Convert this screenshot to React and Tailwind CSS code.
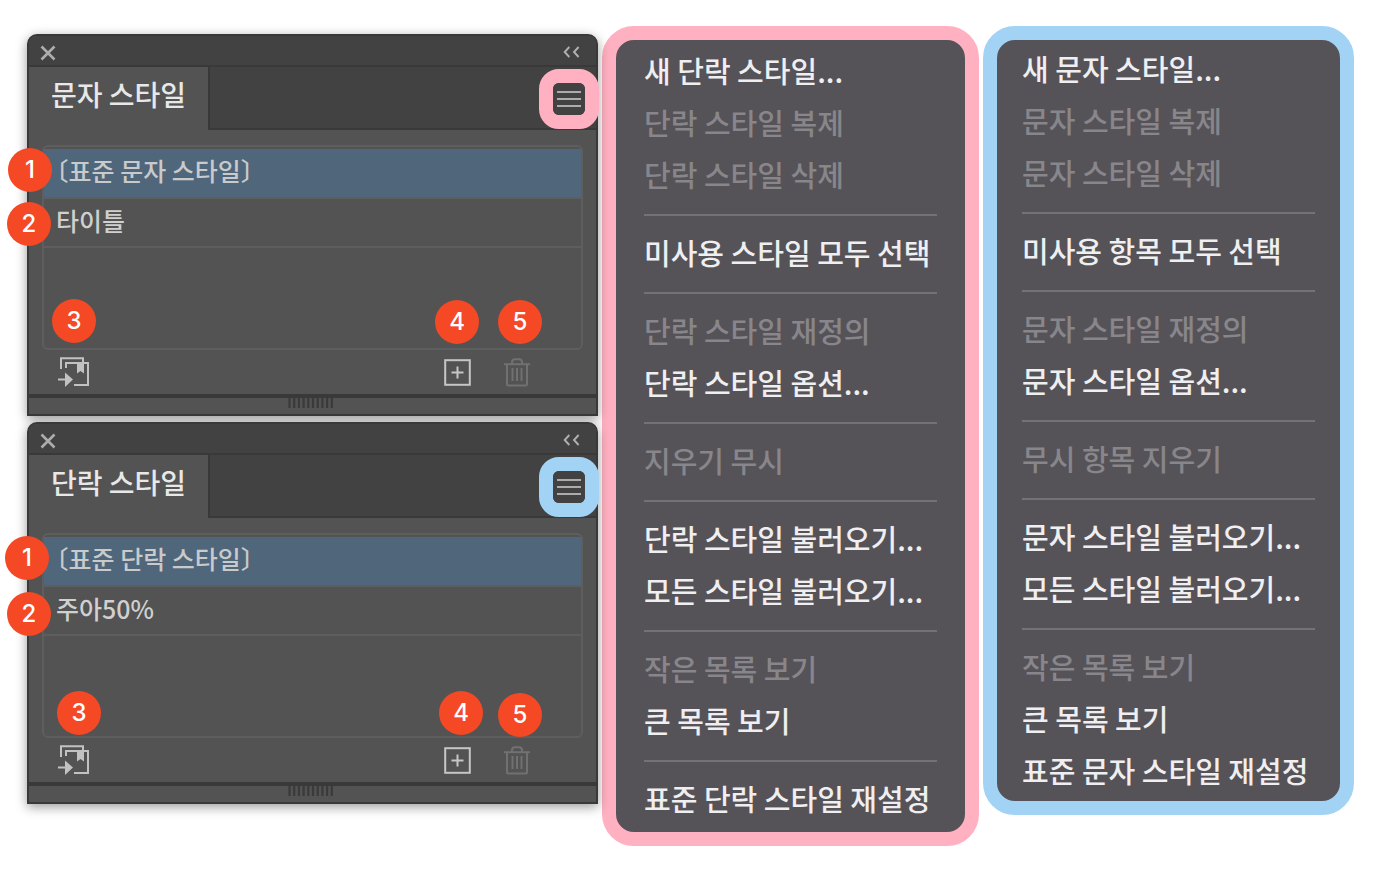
import React from "react";

const characterMenu = [
  { label: "새 단락 스타일..." },
  { label: "단락 스타일 복제", disabled: true },
  { label: "단락 스타일 삭제", disabled: true },
  null,
  { label: "미사용 스타일 모두 선택" },
  null,
  { label: "단락 스타일 재정의", disabled: true },
  { label: "단락 스타일 옵션..." },
  null,
  { label: "지우기 무시", disabled: true },
  null,
  { label: "단락 스타일 불러오기..." },
  { label: "모든 스타일 불러오기..." },
  null,
  { label: "작은 목록 보기", disabled: true },
  { label: "큰 목록 보기" },
  null,
  { label: "표준 단락 스타일 재설정" },
];

const paragraphMenu = [
  { label: "새 문자 스타일..." },
  { label: "문자 스타일 복제", disabled: true },
  { label: "문자 스타일 삭제", disabled: true },
  null,
  { label: "미사용 항목 모두 선택" },
  null,
  { label: "문자 스타일 재정의", disabled: true },
  { label: "문자 스타일 옵션..." },
  null,
  { label: "무시 항목 지우기", disabled: true },
  null,
  { label: "문자 스타일 불러오기..." },
  { label: "모든 스타일 불러오기..." },
  null,
  { label: "작은 목록 보기", disabled: true },
  { label: "큰 목록 보기" },
  { label: "표준 문자 스타일 재설정" },
];

const characterBadges = [
  "left-[-21px] top-[112px]",
  "left-[-22px] top-[166px]",
  "left-[23px] top-[263px]",
  "right-[117px] top-[264px]",
  "right-[54px] top-[264px]",
];

const paragraphBadges = [
  "left-[-24px] top-[112px]",
  "left-[-22px] top-[168px]",
  "left-[28px] top-[267px]",
  "right-[113px] top-[267px]",
  "right-[54px] top-[269px]",
];

function CloseIcon() {
  return (
    <svg width="16" height="16" viewBox="0 0 16 16" fill="none" stroke="#adadad" strokeWidth="2.6" aria-hidden="true">
      <path d="M1.5 1.5 14.5 14.5M14.5 1.5 1.5 14.5" />
    </svg>
  );
}

function CollapseIcon() {
  return (
    <svg width="17" height="12" viewBox="0 0 17 12" fill="none" stroke="#b0b0b0" strokeWidth="1.9" aria-hidden="true">
      <path d="M6.3 1 1.7 6l4.6 5M15.6 1 11 6l4.6 5" />
    </svg>
  );
}

function ImportIcon() {
  return (
    <svg width="32" height="30" viewBox="0 0 32 30" fill="none" stroke="#c2c2c2" strokeWidth="2" aria-hidden="true">
      <path d="M4 12V1.2h22V5" />
      <path d="M9 11V6h22v22H17" />
      <path d="M1 22.5h9" />
      <path d="M8 15.5 16 22.5 8 30Z" fill="#c2c2c2" stroke="none" />
      <path d="M20 5h7v11.5l-3.5-2.5-3.5 2.5Z" fill="#c2c2c2" stroke="none" />
    </svg>
  );
}

function AddIcon() {
  return (
    <svg width="27" height="27" viewBox="0 0 27 27" fill="none" stroke="#c6c6c6" strokeWidth="2" aria-hidden="true">
      <rect x="1.2" y="1.2" width="24.6" height="24.6" />
      <path d="M7.5 13.5h12M13.5 7.5v12" />
    </svg>
  );
}

function TrashIcon() {
  return (
    <svg width="26" height="29" viewBox="0 0 26 29" fill="none" stroke="#717171" strokeWidth="2" aria-hidden="true">
      <path d="M0 6.2h26" />
      <path d="M8 6V4.2Q8 1.2 11 1.2h4Q18 1.2 18 4.2V6" />
      <path d="M3 6v20q0 1.5 1.5 1.5h17q1.5 0 1.5-1.5V6" />
      <path d="M8.5 10v13M13 10v13M17.5 10v13" />
    </svg>
  );
}

function Grip() {
  return (
    <svg width="46" height="10" viewBox="0 0 46 10" stroke="#3a3a3a" strokeWidth="2.2" aria-hidden="true">
      <path d="M1.5 0v10M6.2 0v10M10.9 0v10M15.6 0v10M20.3 0v10M25 0v10M29.7 0v10M34.4 0v10M39.1 0v10M43.8 0v10" />
    </svg>
  );
}

function StylePanel({ title, baseStyle, customStyle, ringClass, badges }) {
  return (
    <section
      aria-label={title}
      className="relative rounded-t-[10px] border-2 border-[#393939] bg-[#535353] shadow-[0_3px_12px_rgba(0,0,0,0.4)]"
    >
      <header className="flex h-[31px] items-center justify-between rounded-t-lg border-b-2 border-[#393939] bg-[#424242] pr-4 pl-[11px]">
        <button type="button" aria-label="닫기" className="mt-1">
          <CloseIcon />
        </button>
        <button type="button" aria-label="접기" className="mt-0.5">
          <CollapseIcon />
        </button>
      </header>

      <div className="relative flex h-[63px]" role="tablist">
        <button
          type="button"
          role="tab"
          aria-selected="true"
          className="w-[179px] pb-[9px] pl-[22px] text-left text-[28px] leading-[54px] font-medium text-[#e8e8e8]"
        >
          {title}
        </button>
        <div className="flex-1 border-b-2 border-l-2 border-[#393939] bg-[#424242]" />
        <button
          type="button"
          aria-label="패널 메뉴"
          className={`absolute top-0.5 -right-[3px] flex size-[60px] items-center justify-center rounded-[20px] border-[14px] ${ringClass}`}
        >
          <span className="flex size-8 shrink-0 items-center justify-center rounded-md bg-[#424242]">
            <svg width="24" height="18" viewBox="0 0 24 18" stroke="#acacac" strokeWidth="2" aria-hidden="true">
              <path d="M0 2h24M0 9h24M0 16h24" />
            </svg>
          </span>
        </button>
      </div>

      <div className="px-[13px] pt-[15px]">
        <ul className="h-[205px] rounded-md border-2 border-[#5e5e5e] pt-0.5 text-[25px] leading-[42px] font-medium">
          <li className="border-b-2 border-[#5e5e5e]">
            <button
              type="button"
              className="block h-12 w-full bg-[#50667a] pb-1.5 pl-3 text-left text-[#c8cacc] [font-feature-settings:'halt']"
            >
              {baseStyle}
            </button>
          </li>
          <li className="border-b-2 border-[#5e5e5e]">
            <button type="button" className="block h-[47px] w-full pb-[5px] pl-3 text-left text-[#d0d0d0]">
              {customStyle}
            </button>
          </li>
        </ul>
        <div className="flex h-11 items-center pr-[53px] pl-[15px]">
          <button type="button" aria-label="스타일 불러오기">
            <ImportIcon />
          </button>
          <button type="button" aria-label="새 스타일" className="mr-[33px] ml-auto">
            <AddIcon />
          </button>
          <button type="button" aria-label="스타일 삭제" disabled>
            <TrashIcon />
          </button>
        </div>
      </div>

      <div className="flex h-5 justify-center border-t-4 border-[#393939] pr-1">
        <Grip />
      </div>

      {badges.map((place, i) => (
        <span
          key={place}
          className={`absolute flex size-11 items-center justify-center rounded-full bg-[#f54825] font-['Inter',sans-serif] text-2xl font-medium text-white ${place}`}
        >
          {i + 1}
        </span>
      ))}
    </section>
  );
}

function StyleMenu({ label, items, className }) {
  return (
    <ul
      role="menu"
      aria-label={label}
      className={`rounded-[32px] border-[14px] bg-[#555358] text-[29px] leading-[48px] font-medium ${className}`}
    >
      {items.map((item, i) =>
        item ? (
          <li key={i} role="none">
            <button
              type="button"
              role="menuitem"
              disabled={item.disabled}
              className="block h-[52px] w-full pb-1 text-left whitespace-nowrap text-[#efeef0] disabled:text-[#88868b]"
            >
              {item.label}
            </button>
          </li>
        ) : (
          <li key={i} role="separator" className="flex h-[26px] items-center">
            <span className="h-0.5 w-full bg-[#747277]" />
          </li>
        )
      )}
    </ul>
  );
}

export default function App() {
  return (
    <main className="grid min-h-screen grid-cols-[571fr_377fr_371fr] items-start gap-1 bg-white pt-[26px] pr-[26px] pb-8 pl-[27px] font-['Noto_Sans_CJK_KR',sans-serif]">
      <div className="flex flex-col gap-1.5 pt-2">
        <StylePanel
          title="문자 스타일"
          baseStyle="〔표준 문자 스타일〕"
          customStyle="타이틀"
          ringClass="border-[#ffb0c1]"
          badges={characterBadges}
        />
        <StylePanel
          title="단락 스타일"
          baseStyle="〔표준 단락 스타일〕"
          customStyle="주아50%"
          ringClass="border-[#a2d3f5]"
          badges={paragraphBadges}
        />
      </div>
      <StyleMenu
        label="단락 스타일 메뉴"
        items={characterMenu}
        className="border-[#ffb0c1] px-7 py-1.5"
      />
      <StyleMenu
        label="문자 스타일 메뉴"
        items={paragraphMenu}
        className="border-[#a2d3f5] px-[25px] pt-1 pb-[3px]"
      />
    </main>
  );
}
